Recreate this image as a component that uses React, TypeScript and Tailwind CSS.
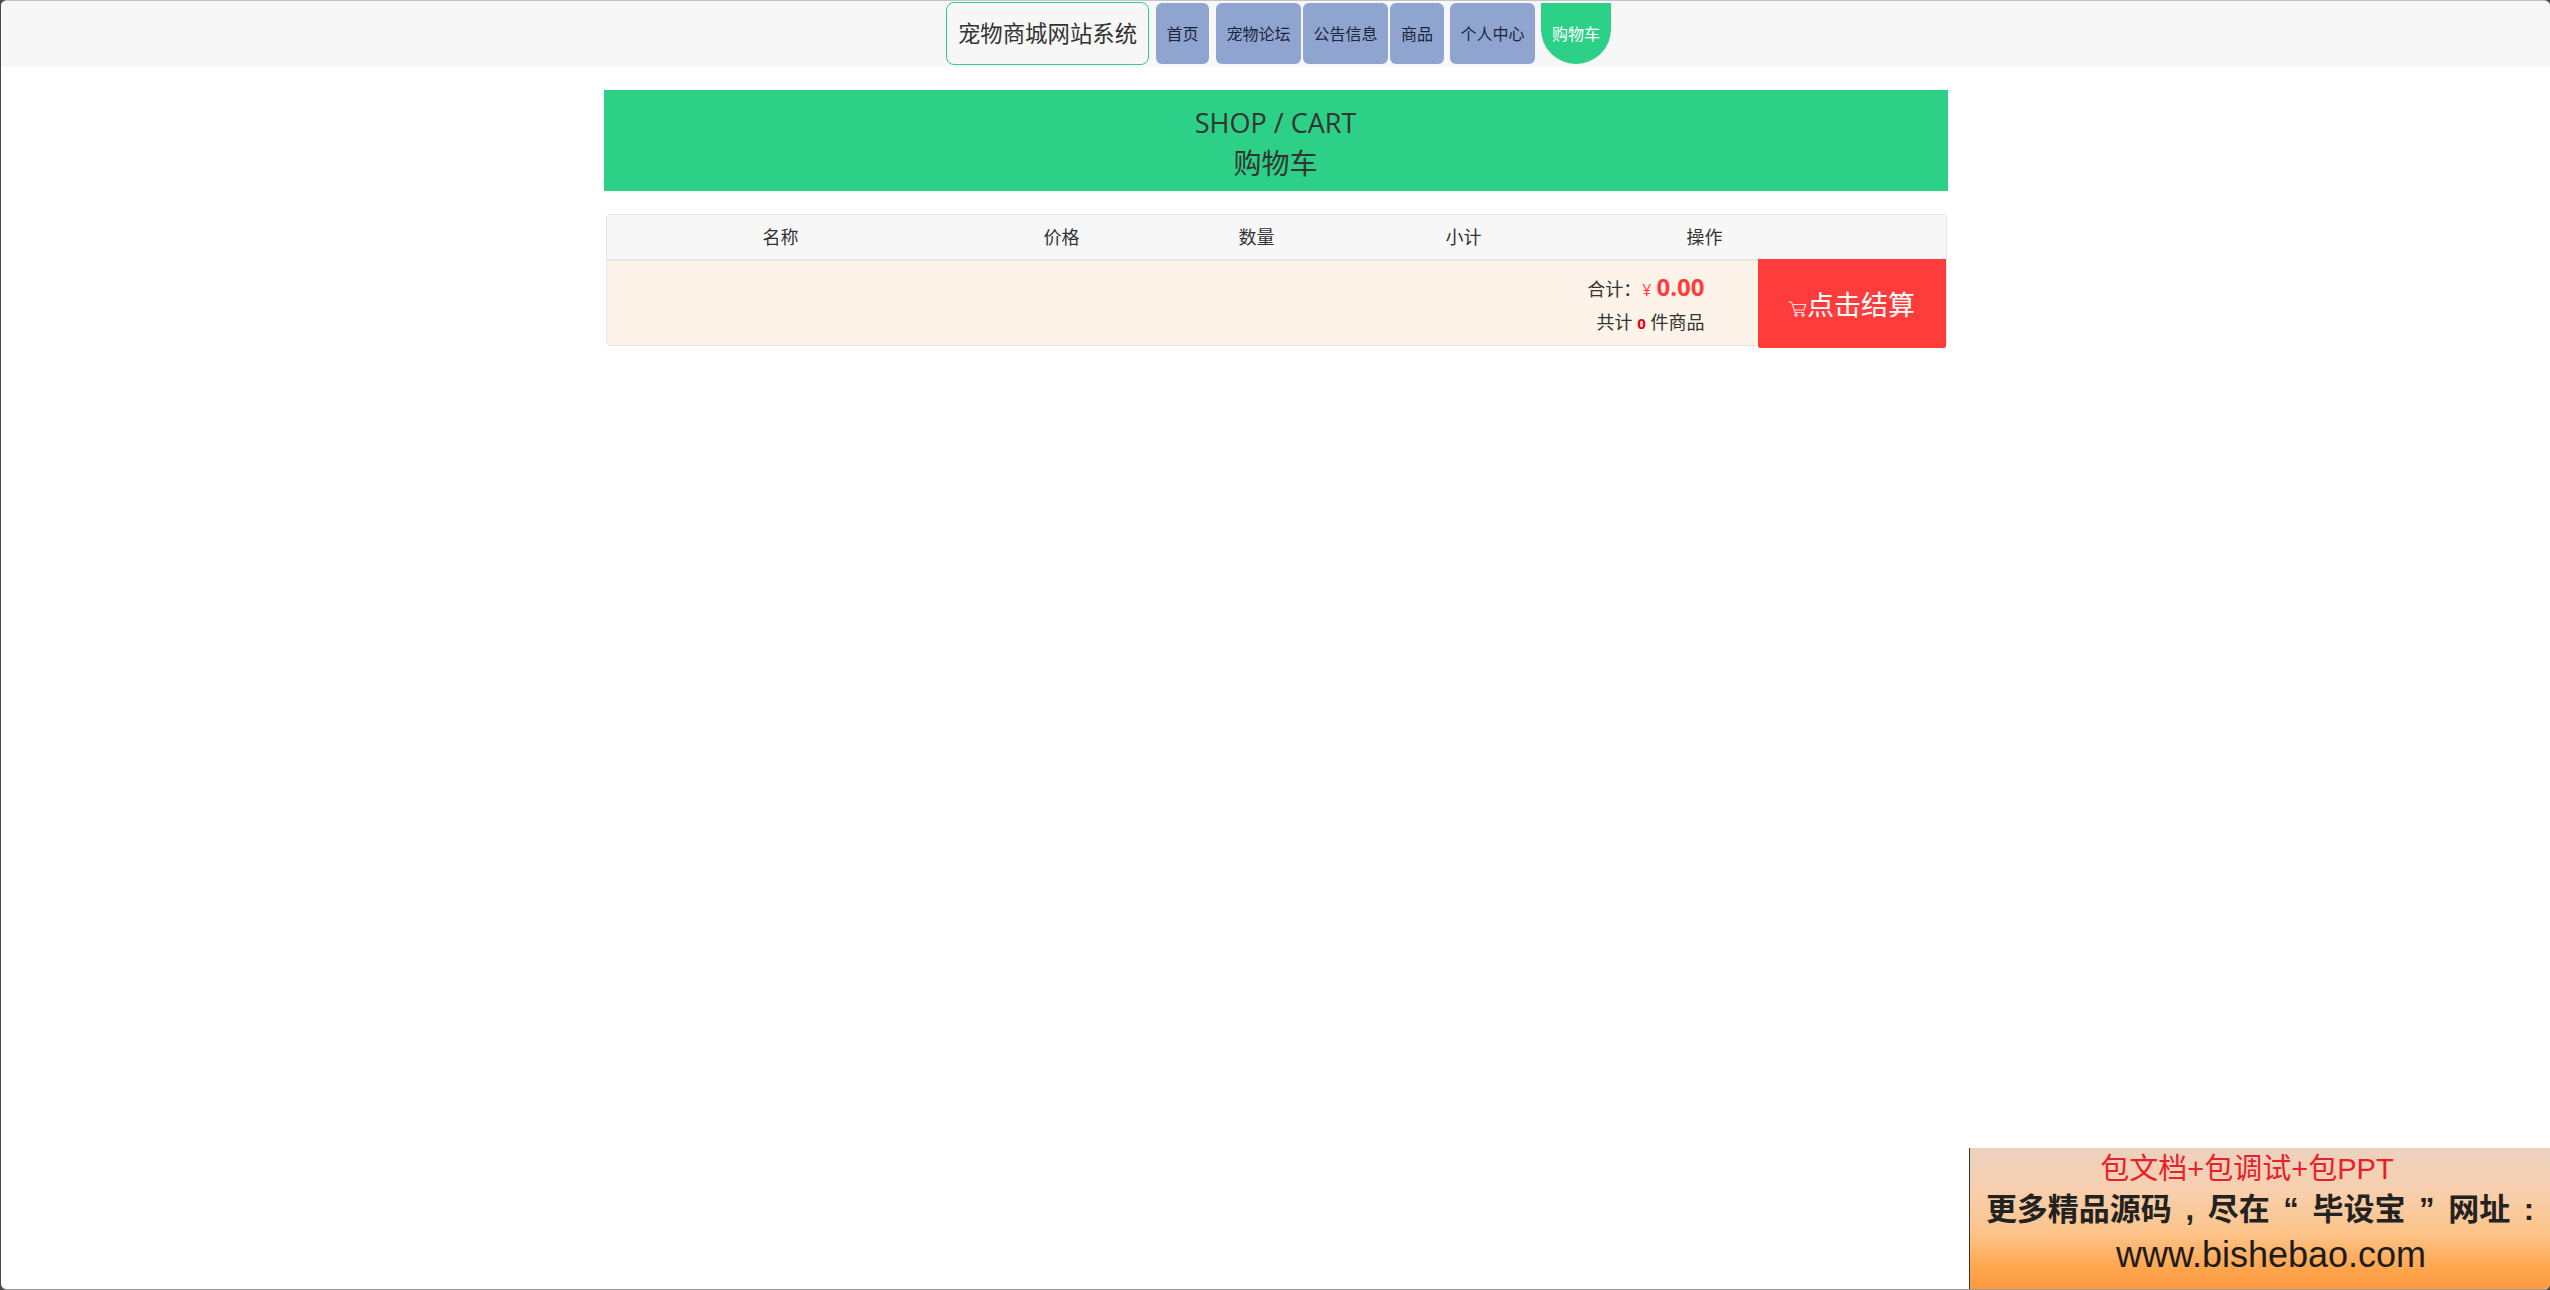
const FONT = "font-['Open_Sans','Noto_Sans_CJK_SC',sans-serif]";

const navItems = [
  { label: "首页", cls: "w-[53px] mr-[7px]" },
  { label: "宠物论坛", cls: "w-[85px] mr-[2px]" },
  { label: "公告信息", cls: "w-[85px] mr-[2px]" },
  { label: "商品", cls: "w-[54px] mr-[6px]" },
  { label: "个人中心", cls: "w-[85px] mr-[6px]" },
];

const columns = [
  { label: "名称", cls: "w-[348px]" },
  { label: "价格", cls: "w-[214px]" },
  { label: "数量", cls: "w-[176px]" },
  { label: "小计", cls: "w-[238px]" },
  { label: "操作", cls: "w-[244px]" },
];

function CartIcon() {
  return (
    <svg viewBox="0 0 19 16" className="mt-[7px] h-[16px] w-[19px] shrink-0" fill="none" stroke="#ffdcdc" strokeWidth="1.2">
      <path d="M0.5 1h3l3.5 10.5h9" />
      <path d="M4.5 3.5h13l-1.5 5.5H6" />
      <circle cx="8" cy="14" r="1.2" />
      <circle cx="15" cy="14" r="1.2" />
    </svg>
  );
}

export default function App() {
  return (
    <div className="h-[1290px] w-full bg-[#4a4a4a]">
      <div className={`relative ml-[1px] h-full overflow-hidden rounded-[6px] border-y border-t-[#c4c4c4] border-b-[#999999] bg-white ${FONT}`}>
        {/* Nav */}
        <div className="flex h-[66px] items-start justify-center bg-[#f7f7f7] pl-[6px] pt-[1px]">
          <div className="mr-[7px] flex h-[63px] w-[203px] items-center justify-center rounded-[8px] border border-[#2dd087] text-[22.4px] text-[#333333]">
            宠物商城网站系统
          </div>
          {navItems.map((item) => (
            <div
              key={item.label}
              className={`mt-[1px] flex h-[61px] items-center justify-center rounded-[6px] bg-[#8fa4cf] text-[16px] text-[#1c2440] ${item.cls}`}
            >
              {item.label}
            </div>
          ))}
          <div className="mt-[1px] flex h-[61px] w-[70px] items-center justify-center rounded-b-[35px] bg-[#2dd087] text-[16px] text-white">
            购物车
          </div>
        </div>

        {/* Title */}
        <div className="mx-auto mt-[23px] flex h-[101px] w-[1344px] flex-col items-center justify-center bg-[#2cd086] pt-[4px] text-[28px] leading-[40px] text-[#333333]">
          <div className="text-[27px]">SHOP / CART</div>
          <div>购物车</div>
        </div>

        {/* Cart table */}
        <div className="mx-auto mt-[23px] w-[1344px] pl-[2px] pr-[1px]">
          <div className="rounded-[3px] border border-[#e6e6e6]">
            <div className="flex h-[46px] items-center border-b-[2px] border-[#e6e6e6] bg-[#f7f7f7] pt-[1px] text-[18px] text-[#333333]">
              {columns.map((col) => (
                <div key={col.label} className={`text-center ${col.cls}`}>
                  {col.label}
                </div>
              ))}
            </div>
            <div className="flex h-[84px] items-stretch bg-[#fdf3e8]">
              <div className="flex flex-1 flex-col items-end justify-center pr-[53px] pt-[2px] text-[#333333]">
                <div className="flex items-baseline text-[18px] leading-[34px]">
                  <span>合计：</span>
                  <span className="ml-[1px] text-[16px] text-[#ff3c3c]">¥</span>
                  <span className="ml-[5px] text-[24px] font-bold text-[#ff3c3c]">0.00</span>
                </div>
                <div className="text-[18px] leading-[30px]">
                  共计 <span className="text-[15px] font-bold text-[#e60012]">0</span> 件商品
                </div>
              </div>
              <div className="relative -mb-[3px] -mt-[2px] flex w-[188px] items-center justify-center rounded-b-[2px] bg-[#ff3c3c] pt-[3px] text-[27px] text-white">
                <CartIcon />
                <span>点击结算</span>
              </div>
            </div>
          </div>
        </div>

        {/* Promo corner */}
        <div className="absolute bottom-0 right-0 flex h-[141px] w-[581px] flex-col items-center border-l border-[#333333] bg-[linear-gradient(180deg,#ecd2bf_0%,#f8cfae_30%,#fcc48a_60%,#ffa64e_85%,#fb9a3f_100%)]">
          <div className="mr-[26px] mt-[2px] font-['Liberation_Sans','Noto_Sans_CJK_SC',sans-serif] text-[29px] leading-[38px] text-[#e8202a]">
            包文档+包调试+包PPT
          </div>
          <div className="font-['Liberation_Sans','Noto_Sans_CJK_SC',sans-serif] text-[31px] leading-[44px] font-bold text-[#222222] [word-spacing:5px]">
            更多精品源码 , 尽在 “ 毕设宝 ” 网址 :
          </div>
          <div className="ml-[22px] font-['Liberation_Sans',sans-serif] text-[36px] leading-[46px] text-[#1c1c1c]">
            www.bishebao.com
          </div>
        </div>
      </div>
    </div>
  );
}
